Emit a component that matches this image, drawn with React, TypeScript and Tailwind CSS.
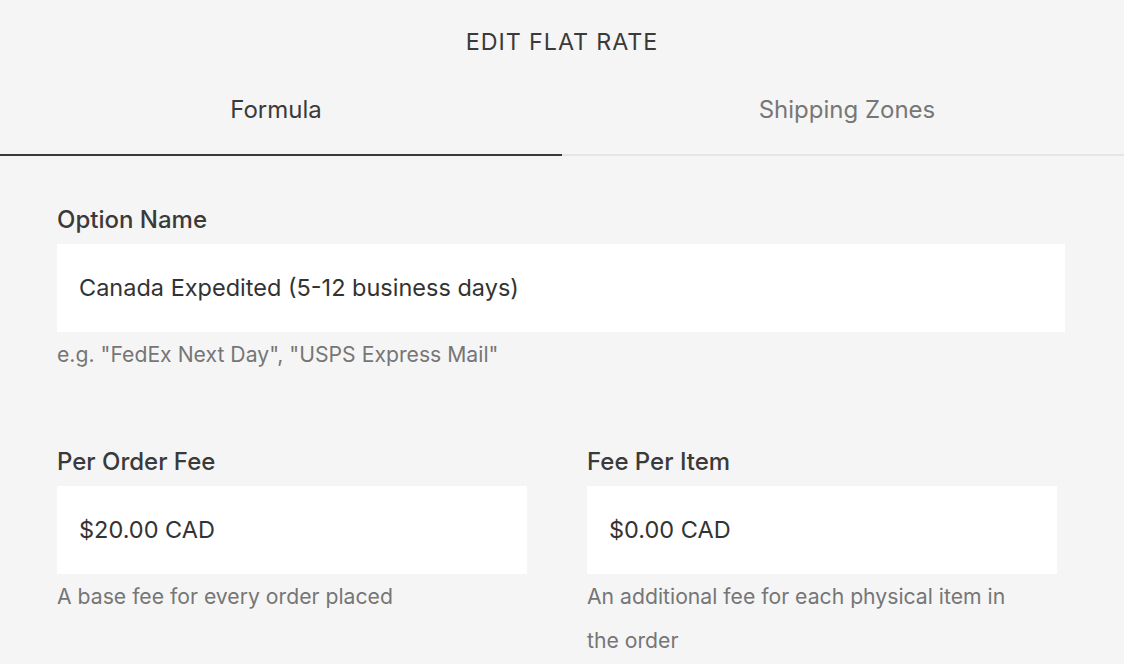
const font = "font-['Inter','Roboto',sans-serif]"

function Field({ label, value, help, className = '' }: { label: string; value: string; help: string; className?: string }) {
  return (
    <div className={className}>
      <div className="text-[24px] font-medium leading-[28px] text-[#3a3a3a]">{label}</div>
      <div className="mt-[10px] flex h-[88px] items-center bg-white px-[22px] text-[23.5px] text-[#333]">{value}</div>
      <p className="pr-[20px] text-[21.2px] leading-[44px] text-[#767676]">{help}</p>
    </div>
  )
}

export default function App() {
  return (
    <div className={`min-h-screen w-[1124px] bg-[#f5f5f5] ${font}`}>
      <div className="pt-[28px] text-center text-[23.3px] leading-[28px] tracking-[0.04em] text-[#3a3a3a]">EDIT FLAT RATE</div>

      <div className="grid grid-cols-2">
        <button className="border-b-2 border-[#3a3a3a] pb-[30px] pr-[10px] pt-[40px] text-[24px] leading-[28px] text-[#3a3a3a]">Formula</button>
        <button className="border-b-2 border-[#e5e5e5] pb-[30px] pl-[8px] pt-[40px] text-[24px] leading-[28px] text-[#777]">Shipping Zones</button>
      </div>

      <div className="px-[57px] pt-[50px]">
        <Field label="Option Name" value="Canada Expedited (5-12 business days)" help={'e.g. "FedEx Next Day", "USPS Express Mail"'} className="w-[1008px]" />

        <div className="mt-[72px] flex gap-[60px]">
          <Field label="Per Order Fee" value="$20.00 CAD" help="A base fee for every order placed" className="w-[470px]" />
          <Field label="Fee Per Item" value="$0.00 CAD" help="An additional fee for each physical item in the order" className="w-[470px]" />
        </div>
      </div>
    </div>
  )
}
